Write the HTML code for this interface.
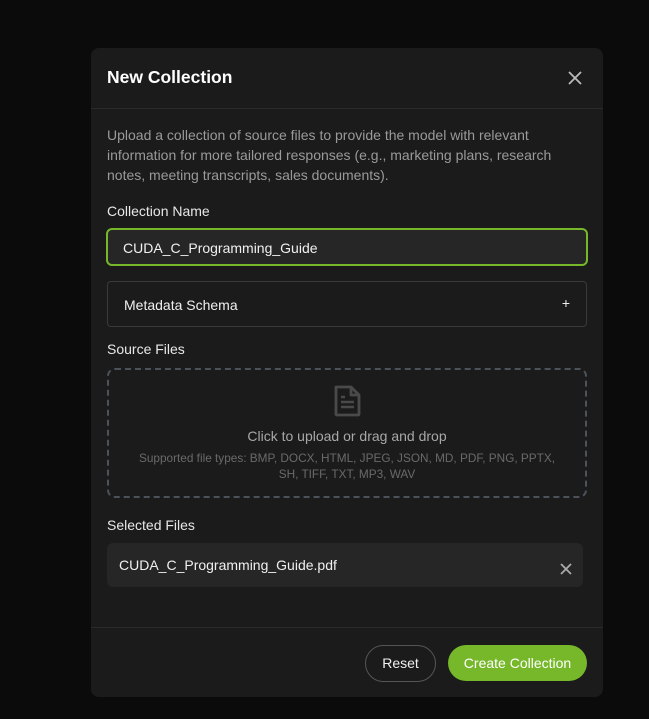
<!DOCTYPE html>
<html><head><style>
*{box-sizing:border-box;margin:0;padding:0}
body{width:649px;height:719px;background:#0b0b0b;font-family:"Liberation Sans",sans-serif;position:relative;overflow:hidden}
.m{position:absolute;left:91px;top:48px;width:512px;height:649px;background:#1b1b1b;border-radius:8px}
.a{position:absolute}
</style></head><body>
<div class="m">
<div class="a" style="left:16px;top:19px;font-size:17.5px;font-weight:bold;color:#fff">New Collection</div>
<svg class="a" style="left:476px;top:22px" width="16" height="16" viewBox="0 0 16 16"><path d="M2 2L14 14M14 2L2 14" stroke="#bbb" stroke-width="1.8"/></svg>
<div class="a" style="left:0;top:60px;width:512px;height:1px;background:#2a2a2a"></div>
<div class="a" style="left:16px;top:77px;width:470px;font-size:14px;line-height:20px;color:#9a9a9a">Upload a collection of source files to provide the model with relevant information for more tailored responses (e.g., marketing plans, research notes, meeting transcripts, sales documents).</div>
<div class="a" style="left:16px;top:155px;font-size:14px;color:#e8e8e8">Collection Name</div>
<div class="a" style="left:15px;top:180px;width:482px;height:38px;border:2px solid #76b82a;border-radius:6px;background:#262626;color:#f0f0f0;font-size:14px;padding:10px 0 0 15px">CUDA_C_Programming_Guide</div>
<div class="a" style="left:16px;top:233px;width:480px;height:46px;border:1px solid #3a3a3a;border-radius:4px;color:#f0f0f0;font-size:14px;padding:15px 0 0 16px">Metadata Schema<span style="position:absolute;right:16px;top:13px;font-size:14px">+</span></div>
<div class="a" style="left:16px;top:293px;font-size:14px;color:#e8e8e8">Source Files</div>
<div class="a" style="left:16px;top:320px;width:480px;height:130px;border:2px dashed #4c525a;border-radius:8px"></div>
<svg class="a" style="left:243px;top:337px" width="27" height="32" viewBox="0 0 27 32"><path d="M2 2H17L25 10V29Q25 30 24 30H3Q2 30 2 29Z M17 2V10H25" fill="none" stroke="#4a4a4a" stroke-width="2.8" stroke-linejoin="round"/><path d="M7 12H11M7 17H20M7 22H20" stroke="#4a4a4a" stroke-width="2.4"/></svg>
<div class="a" style="left:0;top:380px;width:512px;text-align:center;font-size:14px;color:#a8a8a8">Click to upload or drag and drop</div>
<div class="a" style="left:43px;top:402px;width:426px;text-align:center;font-size:11.8px;line-height:16px;color:#6a6a6a">Supported file types: BMP, DOCX, HTML, JPEG, JSON, MD, PDF, PNG, PPTX, SH, TIFF, TXT, MP3, WAV</div>
<div class="a" style="left:16px;top:469px;font-size:14px;color:#e8e8e8">Selected Files</div>
<div class="a" style="left:16px;top:495px;width:476px;height:44px;background:#262626;border-radius:6px;color:#f0f0f0;font-size:14px;padding:14px 0 0 12px">CUDA_C_Programming_Guide.pdf</div>
<svg class="a" style="left:469px;top:515px" width="12" height="12" viewBox="0 0 12 12"><path d="M1 1L11 11M11 1L1 11" stroke="#aaa" stroke-width="1.8"/></svg>
<div class="a" style="left:0;top:579px;width:512px;height:1px;background:#2a2a2a"></div>
<div class="a" style="left:274px;top:597px;width:71px;height:37px;border:1px solid #555;border-radius:19px;color:#f0f0f0;font-size:14px;text-align:center;line-height:35px">Reset</div>
<div class="a" style="left:357px;top:597px;width:139px;height:36px;background:#76b82a;border-radius:18px;color:#fff;font-size:14px;text-align:center;line-height:36px">Create Collection</div>
</div>
</body></html>
